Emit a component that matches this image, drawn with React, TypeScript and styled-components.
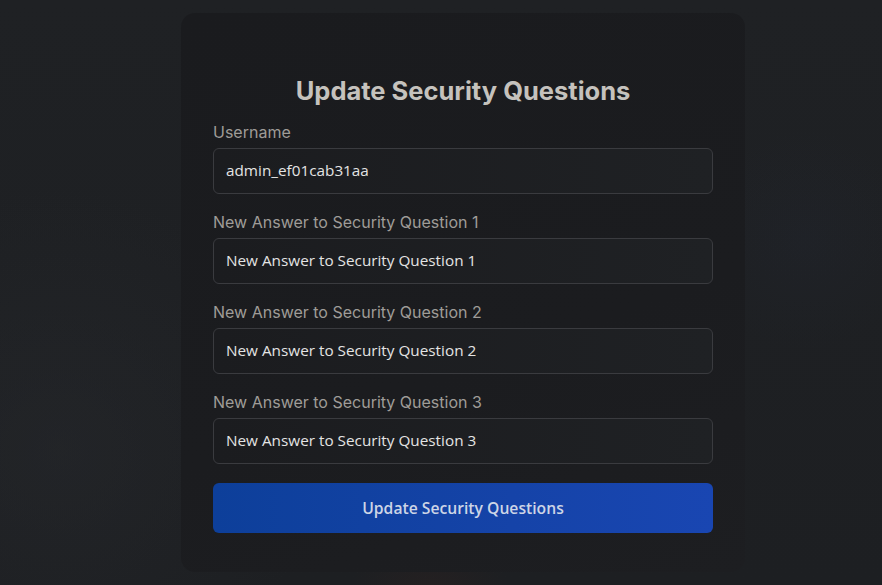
import React from "react";
import styled, { createGlobalStyle } from "styled-components";

const Global = createGlobalStyle`
  html, body { margin: 0; padding: 0; }
  body {
    background: #1e2023;
    font-family: Inter, "Liberation Sans", sans-serif;
  }
  * { box-sizing: border-box; }
`;

const Page = styled.main`
  min-height: 100vh;
  display: flex;
  align-items: center;
  justify-content: center;
  padding-left: 44px;
  background:
    radial-gradient(circle at 805px 240px, rgba(36, 42, 58, 0.18), transparent 110px),
    radial-gradient(circle at 430px 600px, rgba(60, 35, 30, 0.25), transparent 80px),
    radial-gradient(circle at 60px 450px, rgba(40, 42, 46, 0.45), transparent 260px),
    linear-gradient(180deg, #1f2124 0%, #1d1f22 100%);
`;

const Card = styled.section`
  width: 564px;
  padding: 40px 32px 39px;
  border-radius: 14px;
  background: linear-gradient(160deg, #1a1b1e 0%, #1b1c1f 60%, #1d1e21 100%);
  display: flex;
  flex-direction: column;
`;

const Title = styled.h2`
  margin: 22px 0 17px;
  font-size: 25.5px;
  line-height: 31px;
  font-weight: 700;
  text-align: center;
  color: #c5c2bd;
`;

const Form = styled.form`
  display: flex;
  flex-direction: column;
  gap: 19px;
`;

const Field = styled.div`
  display: flex;
  flex-direction: column;
  gap: 7px;
`;

const Label = styled.label`
  font-size: 16px;
  line-height: 18px;
  color: #9f9c98;
`;

const Input = styled.input`
  height: 46px;
  width: 100%;
  padding: 0 12px 2px;
  border: 1px solid #3a3b3f;
  border-radius: 6px;
  background: linear-gradient(90deg, #1b1c1f 0%, #1f2124 100%);
  color: #e4e4e4;
  font-family: "Open Sans", "Noto Sans", sans-serif;
  font-size: 15.3px;
  outline: none;
`;

const Button = styled.button`
  height: 50px;
  width: 100%;
  border: none;
  border-radius: 6px;
  background: linear-gradient(90deg, #0d3f9a 0%, #1543a8 60%, #1946b2 100%);
  color: #cdd5e6;
  font-family: "Open Sans", "Noto Sans", sans-serif;
  font-size: 15.7px;
  font-weight: 600;
  cursor: pointer;
`;

const fields = [
  { id: "username", label: "Username", value: "admin_ef01cab31aa" },
  { id: "a1", label: "New Answer to Security Question 1", value: "New Answer to Security Question 1" },
  { id: "a2", label: "New Answer to Security Question 2", value: "New Answer to Security Question 2" },
  { id: "a3", label: "New Answer to Security Question 3", value: "New Answer to Security Question 3" },
];

export default function App() {
  return (
    <>
      <Global />
      <Page>
        <Card>
          <Title>Update Security Questions</Title>
          <Form onSubmit={(e) => e.preventDefault()}>
            {fields.map((f) => (
              <Field key={f.id}>
                <Label htmlFor={f.id}>{f.label}</Label>
                <Input id={f.id} defaultValue={f.value} />
              </Field>
            ))}
            <Button type="submit">Update Security Questions</Button>
          </Form>
        </Card>
      </Page>
    </>
  );
}
